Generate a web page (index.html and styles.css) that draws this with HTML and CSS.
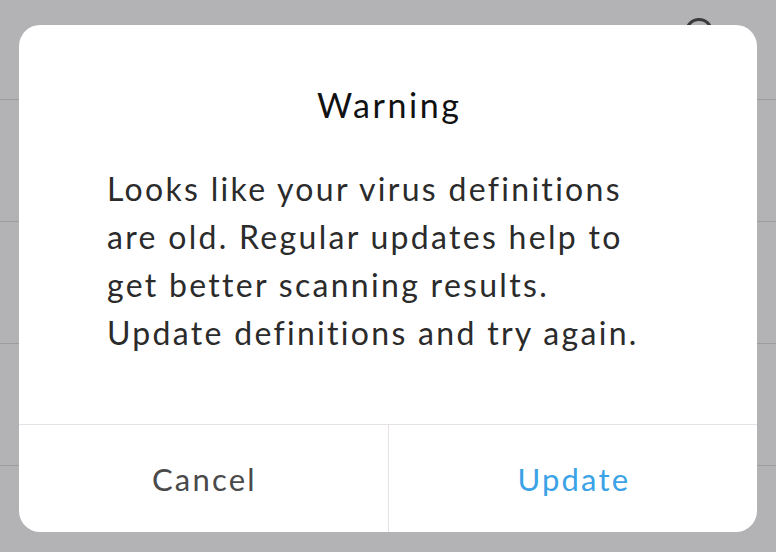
FILE: index.html
```html
<!DOCTYPE html>
<html lang="en">

<head>
	<meta charset="UTF-8">
	<meta name="viewport" content="width=device-width, initial-scale=1.0">
	<title>Warning</title>
	<link rel="stylesheet" href="styles.css">
</head>

<body>
	<div class="screen">
		<!-- pagina de fundo, escurecida pelo dialogo -->
		<div class="page">
			<div class="topbar">
				<span class="topbar-icon"></span>
			</div>
			<div class="row"></div>
			<div class="row"></div>
			<div class="row"></div>
		</div>

		<div class="dialog">
			<h2 class="dialog-title">Warning</h2>
			<p class="dialog-text">Looks like your virus definitions<br>are old. Regular updates help to<br>get better scanning results.<br>Update definitions and try again.</p>
			<div class="dialog-buttons">
				<button class="btn btn-cancel">Cancel</button>
				<button class="btn btn-update">Update</button>
			</div>
		</div>
	</div>
</body>

</html>
```

FILE: styles.css
```css
html,
body {
	margin: 0;
	padding: 0;
	background: #b3b2b4;
	font-family: 'Lato', 'Open Sans', sans-serif;
}

.screen {
	position: relative;
	width: 776px;
	height: 552px;
	overflow: hidden;
}

/* pagina por tras do dialogo */
.page {
	display: flex;
	flex-direction: column;
}

.topbar {
	height: 99px;
	border-bottom: 1px solid #9d9c9e;
	display: flex;
	justify-content: flex-end;
	padding-right: 63px;
}

.topbar-icon {
	margin-top: 18px;
	width: 22px;
	height: 22px;
	border: 3px solid #3b3b3b;
	border-radius: 50%;
}

.row {
	height: 121px;
	border-bottom: 1px solid #9d9c9e;
}

/* dialogo */
.dialog {
	position: absolute;
	left: 19px;
	top: 25px;
	width: 738px;
	height: 507px;
	background: white;
	border-radius: 21px;
	display: flex;
	flex-direction: column;
	overflow: hidden;
}

.dialog-title {
	margin: 60px 0 0 0;
	padding-left: 2.6px;
	font-size: 34px;
	line-height: 40px;
	font-weight: 400;
	letter-spacing: 2.6px;
	color: #111111;
	text-align: center;
}

.dialog-text {
	margin: 40px 0 0 0;
	padding: 0 40px 0 88px;
	font-size: 32px;
	line-height: 48px;
	letter-spacing: 2.3px;
	color: #2b2b2b;
	white-space: nowrap;
}

.dialog-buttons {
	margin-top: auto;
	height: 107px;
	border-top: 1px solid #e6e1e4;
	display: flex;
}

.btn {
	flex: 1;
	border: none;
	background: transparent;
	font-family: inherit;
	font-size: 31px;
	letter-spacing: 2.2px;
	padding: 0 0 0 2.2px;
	cursor: pointer;
}

.btn-cancel {
	color: #4a4a4a;
	border-right: 1px solid #e6e1e4;
}

.btn-update {
	color: #3aa2e6;
}
```
